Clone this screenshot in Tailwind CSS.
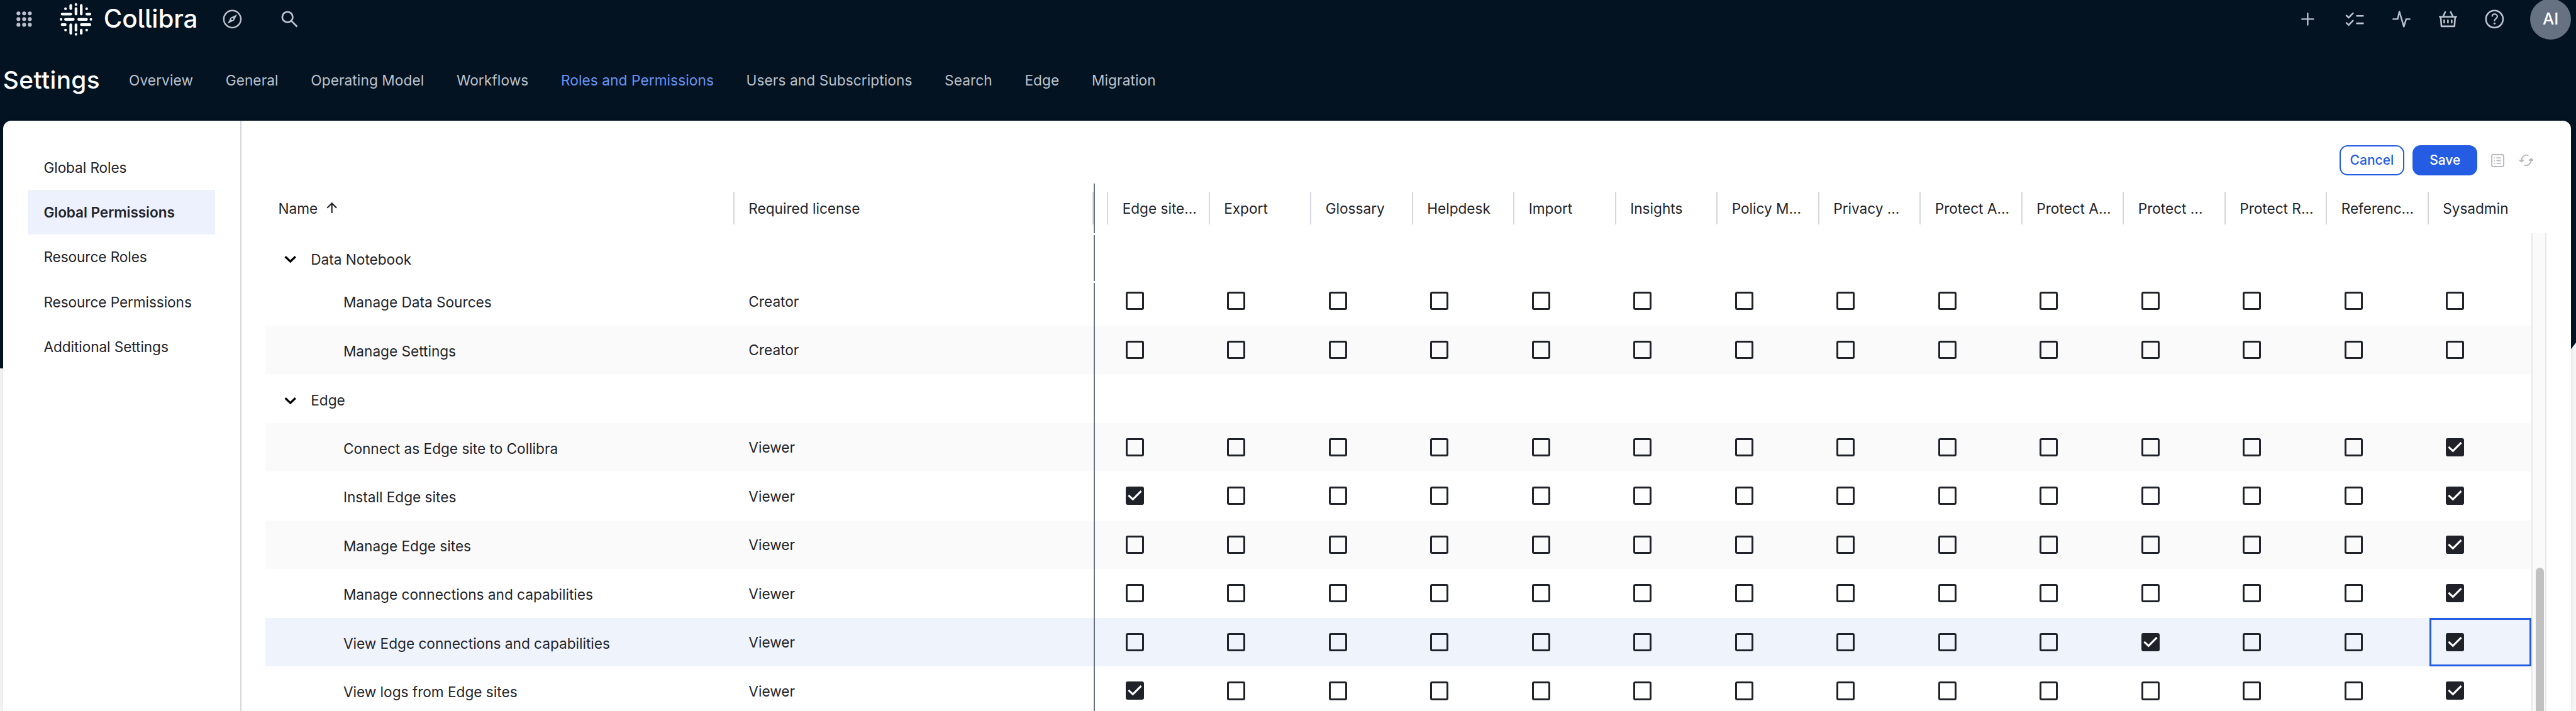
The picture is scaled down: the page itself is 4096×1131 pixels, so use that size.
<!DOCTYPE html>
<html lang="en" class="text-[25.8423px]">
<head>
<meta charset="utf-8">
<title>Collibra Settings</title>
<script src="https://cdn.jsdelivr.net/npm/@tailwindcss/browser@4"></script>
</head>
<body class="h-screen overflow-hidden bg-[#f7f7f8] text-[0.875rem] text-[#1f2329] font-['Inter',sans-serif]">
<div class="relative isolate flex h-screen flex-col">
  <!-- dark backdrop behind the header and the top of the panel -->
  <div class="absolute inset-x-0 top-0 -z-10 h-[22.6875rem] bg-[#031321] [clip-path:polygon(0_0,100%_0,100%_21.09rem,calc(100%_-_0.3125rem)_21.5rem,calc(100%_-_1rem)_100%,0_100%)]"></div>

  <header class="flex h-9.5 shrink-0 items-center pl-3 pr-1.25 text-[#bcc2ce]">
    <svg class="size-6 shrink-0" viewBox="0 0 24 24" fill="currentColor"><circle cx="6.4" cy="6.4" r="1.9"/><circle cx="12" cy="6.4" r="1.9"/><circle cx="17.6" cy="6.4" r="1.9"/><circle cx="6.4" cy="12" r="1.9"/><circle cx="12" cy="12" r="1.9"/><circle cx="17.6" cy="12" r="1.9"/><circle cx="6.4" cy="17.6" r="1.9"/><circle cx="12" cy="17.6" r="1.9"/><circle cx="17.6" cy="17.6" r="1.9"/></svg>
    <div class="ml-5.75 flex w-[8.625rem] shrink-0 items-center text-white">
      <svg class="size-8 shrink-0" viewBox="0 0 32 32" stroke="currentColor" stroke-width="2.6" stroke-linecap="round" fill="none">
        <path d="M16 1.33v.01M16 5.3v5.4M10.83 2.3v3.1M21.17 2.3v8.4M5.67 5.5v.01M26.5 5.5v.01M2.3 10.83h8.6M26.6 10.83h3.1M1.33 16v.01M5.6 16h7.8M18.6 16h7.8M30.67 16v.01M2.3 21.17h3.1M21.3 21.17h8.4M10.83 21.3v8.4M16 21.3v5.4M21.17 26.6v3.1M5.67 26.5v.01M26.5 26.5v.01M16 30.67v.01"/>
      </svg>
      <span class="ml-2.75 text-[1.5625rem] leading-none font-medium tracking-[-0.003em] [font-feature-settings:'cv05','ss03']">Collibra</span>
    </div>
    <svg class="ml-5 size-6 shrink-0" viewBox="0 0 24 24"><circle cx="12" cy="12" r="8.4" fill="none" stroke="currentColor" stroke-width="1.5"/><path fill="currentColor" fill-rule="evenodd" d="M16.7 7.5L13.7 13.5L7.3 16.5L10.3 10.5ZM12 11a1 1 0 1 0 0 2a1 1 0 0 0 0-2Z"/></svg>
    <svg class="ml-8 size-6 shrink-0" viewBox="0 0 24 24" fill="none" stroke="currentColor" stroke-width="1.7"><circle cx="10" cy="10" r="5.15"/><path d="M13.7 13.7L19.5 19.5"/></svg>
    <div class="ml-auto flex items-center gap-5.5">
      <svg class="size-6" viewBox="0 0 24 24" fill="none" stroke="currentColor" stroke-width="1.5" stroke-linecap="round"><path d="M6.4 12h11.2M12 6.4v11.2"/></svg>
      <svg class="size-6" viewBox="0 0 24 24" fill="none" stroke="currentColor" stroke-width="1.6" stroke-linecap="round"><path d="M3.7 8.5L6 10.5L10.1 6.3M3.7 15.8L6 17.8L10.1 13.6M13.9 8.8h6.2M13.9 16.2h6.2"/></svg>
      <svg class="size-6" viewBox="0 0 24 24" fill="none" stroke="currentColor" stroke-width="1.5" stroke-linecap="round" stroke-linejoin="round"><path d="M3.9 12h4.4L10 4.6L14.4 19.4L16.7 12h3.5"/></svg>
      <svg class="size-6" viewBox="0 0 24 24" fill="none" stroke="currentColor" stroke-width="1.6" stroke-linecap="round" stroke-linejoin="round"><path d="M3.9 9.8h16.3M9.3 5L7.2 9.6M14.7 5L16.9 9.6M4.9 10L5.6 19.1H18.4L19.1 10M8.3 13.2v2.3M12 13.2v2.3M15.7 13.2v2.3"/></svg>
      <svg class="size-6" viewBox="0 0 24 24" fill="none" stroke="currentColor" stroke-width="1.6" stroke-linecap="round"><circle cx="12" cy="12" r="8.4"/><path stroke-width="1.4" d="M9.7 9C10 7.8 10.9 7.1 12.1 7.1C13.6 7.1 14.8 8.1 14.8 9.5C14.8 11.4 12.2 11.7 12.05 13.6"/><circle cx="12.05" cy="16.3" r="1" fill="currentColor" stroke="none"/></svg>
      <div class="ml-0.25 flex size-10 shrink-0 items-center justify-center rounded-full bg-[#667181] text-[1rem] font-medium text-white">AI</div>
    </div>
  </header>

  <div class="flex h-[5.0625rem] shrink-0 items-center pt-0.25 pl-0.75">
    <h1 class="w-31 shrink-0 text-[1.5rem] leading-none font-medium tracking-[0.01em] text-white">Settings</h1>
    <nav id="tabs" class="flex gap-8 tracking-[0.0045em] whitespace-nowrap text-[#bcc2ce]"></nav>
  </div>

  <main class="mx-0.75 mr-1.25 flex min-h-0 flex-1 overflow-hidden rounded-t-lg bg-white shadow-[0_0_0.4rem_rgba(0,0,0,0.1)]">
    <aside class="w-[14.65625rem] shrink-0 border-r-2 border-[#d5d6de] pt-6 pl-6">
      <div id="side" class="w-[11.5625rem] tracking-[-0.003em]"></div>
    </aside>
    <section class="flex min-w-0 flex-1 flex-col pl-[1.46875rem]">
      <div class="flex h-15.5 shrink-0 items-start justify-end pt-6 pr-9 text-[0.8125rem] font-medium">
        <button class="h-7.5 w-16 rounded-lg border-2 border-[#255ce4] text-[#255ce4]">Cancel</button>
        <button class="ml-2 h-7.5 w-16 rounded-lg bg-[#255ce4] text-white">Save</button>
        <svg class="mt-[0.53125rem] ml-[0.84375rem] h-[0.8125rem] w-[0.8125rem]" viewBox="0 0 13 13" fill="none" stroke="#b9bac2" stroke-width="1.2" stroke-linecap="round"><rect x=".65" y=".65" width="11.7" height="11.7" rx="1.3"/><path d="M5.7 3.8h3.6M5.7 6.5h3.6M5.7 9.2h3.6M3.3 3.8v.01M3.3 6.5v.01M3.3 9.2v.01"/></svg>
        <svg class="mt-1.75 ml-[0.84375rem] size-4" viewBox="0 0 16 16" fill="none" stroke="#b9bac2" stroke-width="1.2" stroke-linecap="round" stroke-linejoin="round"><path d="M9.8 3.1A5.1 5.1 0 0 0 3.3 8.2M6.2 12.9A5.1 5.1 0 0 0 12.7 7.8"/><path fill="#b9bac2" d="M1.5 8L3.3 9.6L5.1 8ZM10.9 8L12.7 6.3L14.5 8Z"/></svg>
      </div>
      <div class="flex min-h-0 flex-1">
        <div class="w-[139.4375rem] shrink-0">
          <div id="head" class="flex h-[3.03125rem]"></div>
          <div id="rows"></div>
        </div>
        <div class="mt-12.25 flex w-[0.9375rem] flex-col border-x-2 border-[#e8e8e8] bg-[#fafafa] pt-[20.5625rem] pl-0.75">
          <div class="w-2 flex-1 rounded-t-full bg-[#c1c1c1]"></div>
        </div>
      </div>
    </section>
  </main>
</div>

<script>
const tabs = ['Overview','General','Operating Model','Workflows','Roles and Permissions','Users and Subscriptions','Search','Edge','Migration'];
document.getElementById('tabs').innerHTML = tabs.map(t =>
  `<a class="${t === 'Roles and Permissions' ? 'text-[#6895f7]' : ''}">${t}</a>`).join('');

const side = ['Global Roles','Global Permissions','Resource Roles','Resource Permissions','Additional Settings'];
document.getElementById('side').innerHTML = side.map(t =>
  `<div class="flex h-11 items-center pt-0.25 pl-4 ${t === 'Global Permissions' ? 'bg-[#edf1fd] font-semibold' : ''}">${t}</div>`).join('');

const cols = ['Edge site...','Export','Glossary','Helpdesk','Import','Insights','Policy M...','Privacy ...','Protect A...','Protect A...','Protect ...','Protect R...','Referenc...','Sysadmin'];
const sep = '<i class="ml-auto mr-0.25 h-8 w-[2px] shrink-0 bg-[#d5d6de]"></i>';
const pin = '<i class="w-[2px] shrink-0 bg-[#667181]"></i>';
document.getElementById('head').innerHTML =
  `<div class="flex h-12 w-[28.9375rem] shrink-0 items-center pl-3.25"><span class="pt-0.25">Name</span>
     <svg class="ml-2 size-3" viewBox="0 0 12 12" fill="none" stroke="currentColor" stroke-width="1.3"><path d="M6 11.2V1.6M1.4 6L6 1.4L10.6 6"/></svg>${sep}</div>
   <div class="flex h-12 w-[22.0625rem] shrink-0 items-center pl-3.25"><span class="pt-0.25">Required license</span><i class="ml-auto h-8 w-[2px] bg-[#d5d6de]"></i></div>
   ${pin}
   <div class="flex h-12 w-[0.86rem] shrink-0 items-center">${sep}</div>` +
  cols.map((c, i) => `<div class="flex h-12 w-25 shrink-0 items-center pl-3.25 whitespace-nowrap"><span class="pt-0.25">${c}</span>${i < 13 ? sep : ''}</div>`).join('');

const box = '<i class="size-4.5 rounded-[0.125rem] border-[3px] border-[#1f2329]"></i>';
const ticked = '<svg class="size-4.5" viewBox="0 0 18 18"><rect width="18" height="18" rx="2" fill="#1f2329"/><path d="M2.7 8.6L7 12.6L15.2 4.4" fill="none" stroke="#fff" stroke-width="1.9"/></svg>';
const rows = [
  { group: 'Data Notebook' },
  { name: 'Manage Data Sources', lic: 'Creator', on: [], clipped: true },
  { name: 'Manage Settings', lic: 'Creator', on: [], alt: true },
  { group: 'Edge' },
  { name: 'Connect as Edge site to Collibra', lic: 'Viewer', on: [13], alt: true },
  { name: 'Install Edge sites', lic: 'Viewer', on: [0, 13] },
  { name: 'Manage Edge sites', lic: 'Viewer', on: [13], alt: true },
  { name: 'Manage connections and capabilities', lic: 'Viewer', on: [13] },
  { name: 'View Edge connections and capabilities', lic: 'Viewer', on: [10, 13], focus: true },
  { name: 'View logs from Edge sites', lic: 'Viewer', on: [0, 13] },
];
document.getElementById('rows').innerHTML = rows.map((r, n) => {
  if (r.group) return `<div class="flex h-12">
    <div class="flex w-[28.9375rem] shrink-0 items-center pt-1 pl-[1.1875rem]">
      <svg class="h-2 w-3" viewBox="0 0 12 8" fill="none" stroke="#000" stroke-width="2"><path d="M1 1.4L6 6.2L11 1.4"/></svg>
      <span class="ml-3.5">${r.group}</span></div>
    <div class="w-[22.0625rem] shrink-0"></div>
    <i class="w-[2px] shrink-0 bg-[#667181] ${n === 0 ? 'mt-0.5 mb-0.25' : ''}"></i></div>`;
  const bg = r.focus ? 'bg-[#eff3fb]' : r.alt ? 'bg-[#fafafa]' : '';
  const cells = cols.map((c, i) => `<div class="flex w-25 shrink-0 items-center pl-4 ${r.focus && i === 13 ? 'outline-[3px] -outline-offset-[3px] outline-[#255ce4]' : ''}">${r.on.includes(i) ? ticked : box}</div>`).join('');
  return `<div class="flex ${r.clipped ? '-mt-1.25' : ''} h-12 ${bg}">
    <div class="flex w-[28.9375rem] shrink-0 items-center pt-0.75 pl-19.25">${r.name}</div>
    <div class="flex w-[22.0625rem] shrink-0 items-center pt-0.25 pl-3.25">${r.lic}</div>
    ${r.clipped ? '<i class="mt-1.5 w-[2px] shrink-0 bg-[#667181]"></i>' : pin}
    <div class="w-[0.86rem] shrink-0"></div>${cells}</div>`;
}).join('');
</script>
</body>
</html>
